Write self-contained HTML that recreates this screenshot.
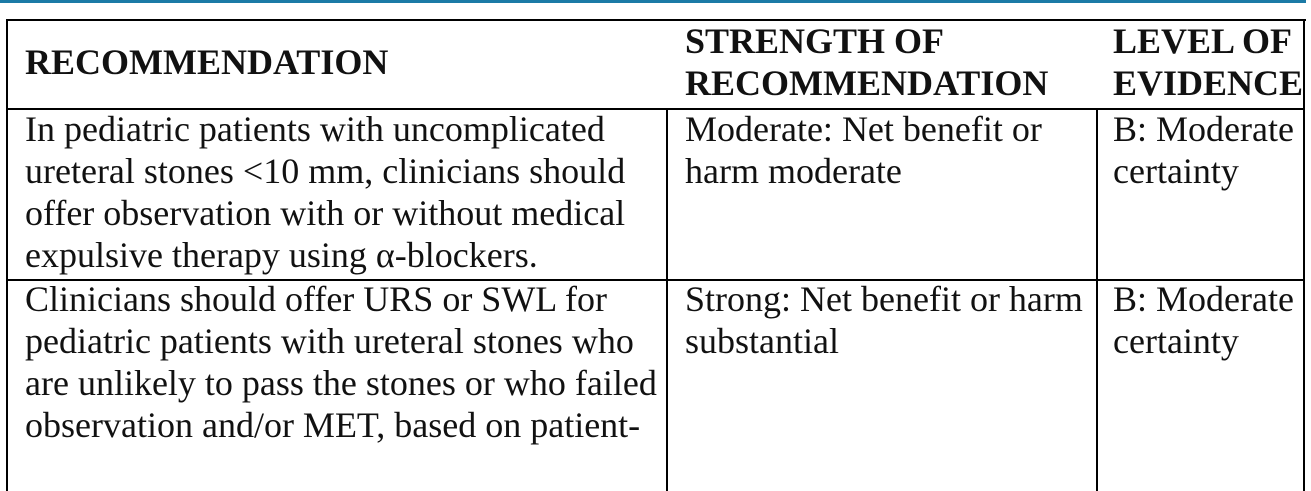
<!DOCTYPE html>
<html><head><style>
body{margin:0;width:1311px;height:491px;background:#fff;position:relative;overflow:hidden;font-family:"Liberation Serif",serif;color:#111}
.bar{position:absolute;left:0;top:0;width:1306px;height:3px;background:#1b7aa6}
.l{position:absolute;background:#000}
.t{position:absolute;font-size:36px;line-height:42px;white-space:nowrap}
.b{font-weight:bold}
</style></head><body>
<div class="bar"></div>
<div class="l" style="left:6px;top:19px;width:1300px;height:2px"></div>
<div class="l" style="left:6px;top:19px;width:2px;height:472px"></div>
<div class="l" style="left:1303px;top:19px;width:2px;height:472px"></div>
<div class="l" style="left:6px;top:108px;width:1299px;height:2px"></div>
<div class="l" style="left:6px;top:279px;width:1299px;height:2px"></div>
<div class="l" style="left:666px;top:108px;width:2px;height:383px"></div>
<div class="l" style="left:1096px;top:108px;width:2px;height:383px"></div>

<div class="t b" style="left:25px;top:41px">RECOMMENDATION</div>
<div class="t b" style="left:685px;top:20px">STRENGTH OF<br>RECOMMENDATION</div>
<div class="t b" style="left:1113px;top:20px">LEVEL OF<br>EVIDENCE</div>

<div class="t" style="left:25px;top:108px">In pediatric patients with uncomplicated<br>ureteral stones &lt;10 mm, clinicians should<br>offer observation with or without medical<br>expulsive therapy using α-blockers.</div>
<div class="t" style="left:685px;top:108px">Moderate: Net benefit or<br>harm moderate</div>
<div class="t" style="left:1113px;top:108px">B: Moderate<br>certainty</div>

<div class="t" style="left:25px;top:278px">Clinicians should offer URS or SWL for<br>pediatric patients with ureteral stones who<br>are unlikely to pass the stones or who failed<br>observation and/or MET, based on patient-</div>
<div class="t" style="left:685px;top:278px">Strong: Net benefit or harm<br>substantial</div>
<div class="t" style="left:1113px;top:278px">B: Moderate<br>certainty</div>
</body></html>
